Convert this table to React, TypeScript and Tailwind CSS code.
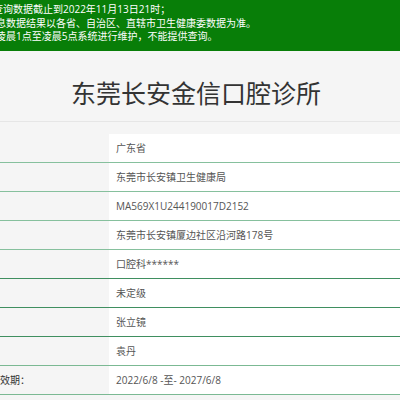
import React from 'react'

const notices = [
  { text: '查询数据截止到2022年11月13日21时；', indent: '-ml-[7px]' },
  { text: '信息数据结果以各省、自治区、直辖市卫生健康委数据为准。', indent: '-ml-[14px]' },
  { text: '凌晨1点至凌晨5点系统进行维护，不能提供查询。', indent: '-ml-[4px]' },
]

interface Row {
  label?: string
  value: string
  line: string
}

const rows: Row[] = [
  { value: '广东省', line: 'border-[#86c09d]' },
  { value: '东莞市长安镇卫生健康局', line: 'border-[#86c09d]' },
  { value: 'MA569X1U244190017D2152', line: 'border-[#86c09d]' },
  { value: '东莞市长安镇厦边社区沿河路178号', line: 'border-[#86c09d]' },
  { value: '口腔科******', line: 'border-[#3f8f60]' },
  { value: '未定级', line: 'border-[#3f8f60]' },
  { value: '张立镜', line: 'border-[#3f8f60]' },
  { value: '袁丹', line: 'border-[#7bb993]' },
  { label: '有效期：', value: '2022/6/8 -至- 2027/6/8', line: 'border-[#7bb993]' },
]

export default function App() {
  return (
    <div
      className="w-[400px] h-[400px] overflow-hidden bg-[#f5f5f5]"
      style={{ fontFamily: '"Open Sans", "Noto Sans CJK SC", sans-serif' }}
    >
      {/* 顶部提示 */}
      <div className="h-[51px] bg-[#087e08] pt-[3px] text-[10px] leading-[13.5px] text-white whitespace-nowrap">
        {notices.map((n) => (
          <div key={n.text} className={n.indent}>
            {n.text}
          </div>
        ))}
      </div>

      {/* 机构名称 */}
      <div className="pt-[27px] pb-[13px] border-b border-[#e6e6e6] text-center">
        <h1 className="text-[25px] leading-[30px] text-[#333] pr-[8px]">东莞长安金信口腔诊所</h1>
      </div>

      {/* 详细信息 */}
      <div className="mt-[12px]">
        {rows.map((r) => (
          <div key={r.value} className={`flex h-[29px] border-b ${r.line}`}>
            <div className="w-[109px] shrink-0 flex items-center text-[10px] text-[#333] whitespace-nowrap">
              {r.label && <span className="-ml-[10px]">{r.label}</span>}
            </div>
            <div className="flex-1 bg-white flex items-center pl-[7px] text-[10px] text-[#555] whitespace-nowrap">
              {r.value}
            </div>
          </div>
        ))}
      </div>
    </div>
  )
}
